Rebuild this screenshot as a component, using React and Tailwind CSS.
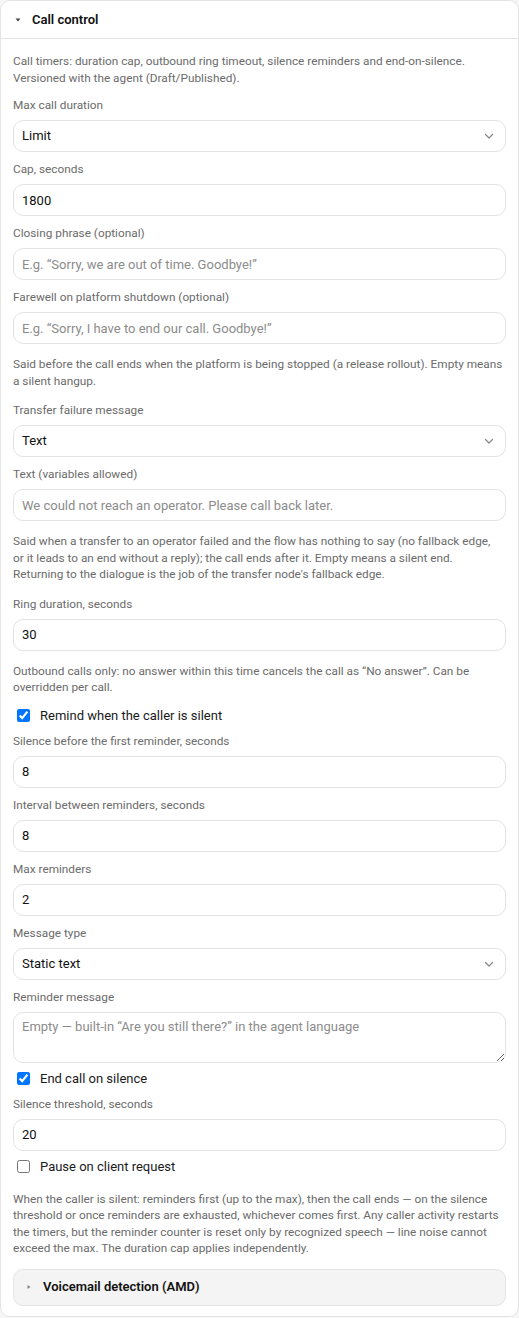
import { useState } from "react";

// ================= SMALL PIECES =================

function Chevron() {
  return (
    <svg
      width="12"
      height="12"
      viewBox="0 0 12 12"
      className="pointer-events-none absolute right-[11px] top-1/2 -translate-y-1/2"
    >
      <path d="M2.5 4.5 6 8l3.5-3.5" fill="none" stroke="#8a8a8a" strokeWidth="1.3" strokeLinecap="round" strokeLinejoin="round" />
    </svg>
  );
}

function Field({ label, children }) {
  return (
    <div className="flex flex-col gap-1.5">
      <label className="text-[11.8px] leading-[18px] text-[#6b6b6b]">{label}</label>
      {children}
    </div>
  );
}

function TextInput({ value, placeholder }) {
  return (
    <input
      type="text"
      defaultValue={value}
      placeholder={placeholder}
      className="h-8 w-full rounded-[10px] border border-[#e3e3e3] bg-white px-2 text-[13px] text-[#111] placeholder:text-[#8c8c8c] outline-none"
    />
  );
}

function Select({ value, options }) {
  return (
    <div className="relative">
      <select
        defaultValue={value}
        className="h-8 w-full appearance-none rounded-[10px] border border-[#e3e3e3] bg-white px-2 text-[13px] text-[#111] outline-none"
      >
        {options.map((o) => (
          <option key={o}>{o}</option>
        ))}
      </select>
      <Chevron />
    </div>
  );
}

// help lines are broken by hand so the wraps match the design
function Help({ lines, className = "" }) {
  return (
    <p className={"my-1 whitespace-nowrap text-[11.8px] leading-[16.5px] text-[#6b6b6b] " + className}>
      {lines.map((l, i) => (
        <span key={i} className="block">{l}</span>
      ))}
    </p>
  );
}

function Check({ label, checked }) {
  const [on, setOn] = useState(checked);
  return (
    <label className="flex h-4 items-center gap-[10px] pl-1 text-[13px] text-[#1a1a1a]">
      <input
        type="checkbox"
        checked={on}
        onChange={() => setOn(!on)}
        className="m-0 h-[13px] w-[13px]"
      />
      {label}
    </label>
  );
}

function Caret({ open }) {
  return (
    <svg width="6" height="6" viewBox="0 0 6 6" className="shrink-0">
      {open ? (
        <path d="M0.5 1.5h5L3 4.5z" fill="#444" />
      ) : (
        <path d="M1.5 1 4.5 3 1.5 5z" fill="#888" />
      )}
    </svg>
  );
}

// ================= PAGE =================

export default function App() {
  return (
    <div
      className="min-h-screen bg-[#f6f6f6]"
      style={{ fontFamily: "Roboto, 'Liberation Sans', sans-serif" }}
    >
      <div className="w-[519px] rounded-[10px] border border-[#e4e4e4] bg-white">

        <div className="flex h-[38px] items-center gap-[11px] border-b border-[#e4e4e4] pl-[14px]">
          <Caret open={true} />
          <span className="text-[13px] font-semibold text-[#111]">Call control</span>
        </div>

        <div className="flex flex-col gap-2 px-3 pb-2.5 pt-3.5">

          <Help
            className="mt-0 mb-0.5"
            lines={[
              "Call timers: duration cap, outbound ring timeout, silence reminders and end-on-silence.",
              "Versioned with the agent (Draft/Published).",
            ]}
          />

          <Field label="Max call duration">
            <Select value="Limit" options={["Limit", "Unlimited"]} />
          </Field>

          <Field label="Cap, seconds">
            <TextInput value="1800" />
          </Field>

          <Field label="Closing phrase (optional)">
            <TextInput placeholder="E.g. “Sorry, we are out of time. Goodbye!”" />
          </Field>

          <Field label="Farewell on platform shutdown (optional)">
            <TextInput placeholder="E.g. “Sorry, I have to end our call. Goodbye!”" />
          </Field>

          <Help
            lines={[
              "Said before the call ends when the platform is being stopped (a release rollout). Empty means",
              "a silent hangup.",
            ]}
          />

          <Field label="Transfer failure message">
            <Select value="Text" options={["Text", "None"]} />
          </Field>

          <Field label="Text (variables allowed)">
            <TextInput placeholder="We could not reach an operator. Please call back later." />
          </Field>

          <Help
            lines={[
              "Said when a transfer to an operator failed and the flow has nothing to say (no fallback edge,",
              "or it leads to an end without a reply); the call ends after it. Empty means a silent end.",
              "Returning to the dialogue is the job of the transfer node's fallback edge.",
            ]}
          />

          <Field label="Ring duration, seconds">
            <TextInput value="30" />
          </Field>

          <Help
            lines={[
              "Outbound calls only: no answer within this time cancels the call as “No answer”. Can be",
              "overridden per call.",
            ]}
          />

          <Check label="Remind when the caller is silent" checked={true} />

          <Field label="Silence before the first reminder, seconds">
            <TextInput value="8" />
          </Field>

          <Field label="Interval between reminders, seconds">
            <TextInput value="8" />
          </Field>

          <Field label="Max reminders">
            <TextInput value="2" />
          </Field>

          <Field label="Message type">
            <Select value="Static text" options={["Static text", "Generated"]} />
          </Field>

          <Field label="Reminder message">
            <textarea
              rows={2}
              placeholder="Empty — built-in “Are you still there?” in the agent language"
              className="h-[51px] w-full rounded-[10px] border border-[#e3e3e3] bg-white px-2 py-[5px] text-[13px] leading-[18px] text-[#111] placeholder:text-[#8c8c8c] outline-none"
            />
          </Field>

          <Check label="End call on silence" checked={true} />

          <Field label="Silence threshold, seconds">
            <TextInput value="20" />
          </Field>

          <Check label="Pause on client request" checked={false} />

          <Help
            className="mt-2"
            lines={[
              "When the caller is silent: reminders first (up to the max), then the call ends — on the silence",
              "threshold or once reminders are exhausted, whichever comes first. Any caller activity restarts",
              "the timers, but the reminder counter is reset only by recognized speech — line noise cannot",
              "exceed the max. The duration cap applies independently.",
            ]}
          />

          <div className="flex h-[37px] items-center gap-[11px] rounded-[10px] border border-[#e4e4e4] bg-[#f4f4f4] pl-[12px]">
            <Caret open={false} />
            <span className="text-[13px] font-semibold text-[#111]">Voicemail detection (AMD)</span>
          </div>

        </div>
      </div>
    </div>
  );
}
